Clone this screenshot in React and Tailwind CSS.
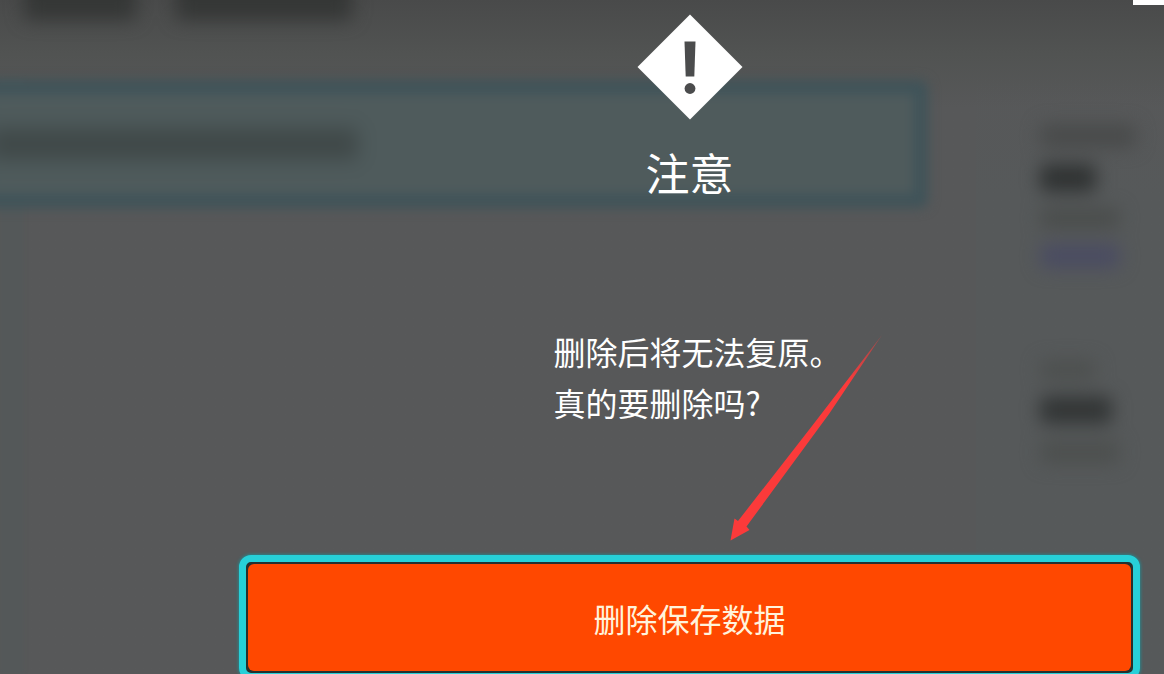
function Smudge({ className }) {
  return <div className={`rounded-md ${className}`} />;
}

function Backdrop() {
  return (
    <div
      aria-hidden="true"
      className="absolute inset-0 flex flex-col overflow-hidden bg-linear-to-b from-[#494a4a] from-0% via-[#515352] via-8% to-[#575859] to-16%"
    >
      <div className="flex h-20 shrink-0 gap-10 pl-6 blur-[9px]">
        <Smudge className="-mt-5 h-10 w-28 bg-[#353736]" />
        <Smudge className="-mt-5 h-10 w-44 bg-[#353736]" />
      </div>
      <div className="flex flex-1">
        <div className="w-6 bg-[#545859] blur-[2px]" />
        <div className="-ml-12 flex-1 blur-[6px]">
          <div className="flex h-32 items-center rounded-lg border-[14px] border-[#3f5359] bg-[#4f5b5c]">
            <Smudge className="h-8 w-[368px] bg-[#404949] blur-[8px]" />
          </div>
        </div>
        <div className="w-12" />
        <div className="flex w-[188px] flex-col bg-linear-to-b from-[#56595a]/0 to-[#56595a] to-20% pt-11 pl-16">
          <div className="flex flex-col gap-4 blur-[9px]">
            <Smudge className="h-6 w-24 bg-[#494b4b]" />
            <Smudge className="h-7 w-14 bg-[#303333]" />
            <Smudge className="h-5 w-20 bg-[#4a4d4c]" />
            <Smudge className="h-6 w-20 bg-[#4a4c62]" />
          </div>
          <div className="flex flex-col gap-4 pt-[92px] blur-[9px]">
            <Smudge className="h-5 w-14 bg-[#4d504f]" />
            <Smudge className="h-7 w-[72px] bg-[#333636]" />
            <Smudge className="h-6 w-20 bg-[#4d504f]" />
          </div>
        </div>
      </div>
    </div>
  );
}

function WarningIcon() {
  return (
    <svg width="106" height="106" viewBox="0 0 106 106" aria-hidden="true">
      <path d="M53 0.5 105.500 53 53 105.500 0.500 53Z" fill="#fff" />
      <path d="M47.500 27.500h11l-1.200 35h-8.600z" fill="#4b4c4d" />
      <circle cx="53" cy="74.500" r="5.400" fill="#4b4c4d" />
    </svg>
  );
}

function PointerArrow() {
  return (
    <svg
      aria-hidden="true"
      className="absolute top-[334px] left-[728px]"
      width="156"
      height="210"
      viewBox="0 0 156 210"
    >
      <defs>
        <linearGradient id="arrow-fade" gradientUnits="userSpaceOnUse" x1="154" y1="1" x2="120" y2="48">
          <stop offset="0" stopColor="#fb3a3a" stopOpacity="0.4" />
          <stop offset="1" stopColor="#fb3a3a" />
        </linearGradient>
      </defs>
      <path
        d="M154 1 101 80 18.500 192.500 21.500 196 2.500 206.500 6.500 184.500 10 187 84 92Z"
        fill="url(#arrow-fade)"
      />
    </svg>
  );
}

export default function App() {
  return (
    <main
      lang="zh-CN"
      className="relative h-screen overflow-hidden bg-[#575859] font-['Noto_Sans_CJK_SC',sans-serif] text-white"
    >
      <Backdrop />
      <section
        role="alertdialog"
        aria-labelledby="dialog-title"
        aria-describedby="dialog-text"
        className="relative flex flex-col items-center pt-[14px] pr-6 pl-[239px]"
      >
        <WarningIcon />
        <h1 id="dialog-title" className="mt-[22px] text-[44px] leading-[60px]">
          注意
        </h1>
        <div className="mt-[124px] pl-4">
          <p id="dialog-text" className="text-[32px] leading-[51px]">
            删除后将无法复原。
            <br />
            真的要删除吗?
          </p>
        </div>
        <button
          type="button"
          className="mt-[127px] w-full rounded-xl border-[7px] border-[#27d0d8] bg-[#26302f] p-[2px] shadow-[0_0_3px_1px_#2b8288]"
        >
          <span className="flex h-[107px] items-center justify-center rounded-md bg-[#ff4800] text-[32px] leading-[48px] text-[#fff3dc]">
            删除保存数据
          </span>
        </button>
      </section>
      <PointerArrow />
      <div className="absolute top-0 right-0 h-[5px] w-[31px] bg-white" />
    </main>
  );
}
